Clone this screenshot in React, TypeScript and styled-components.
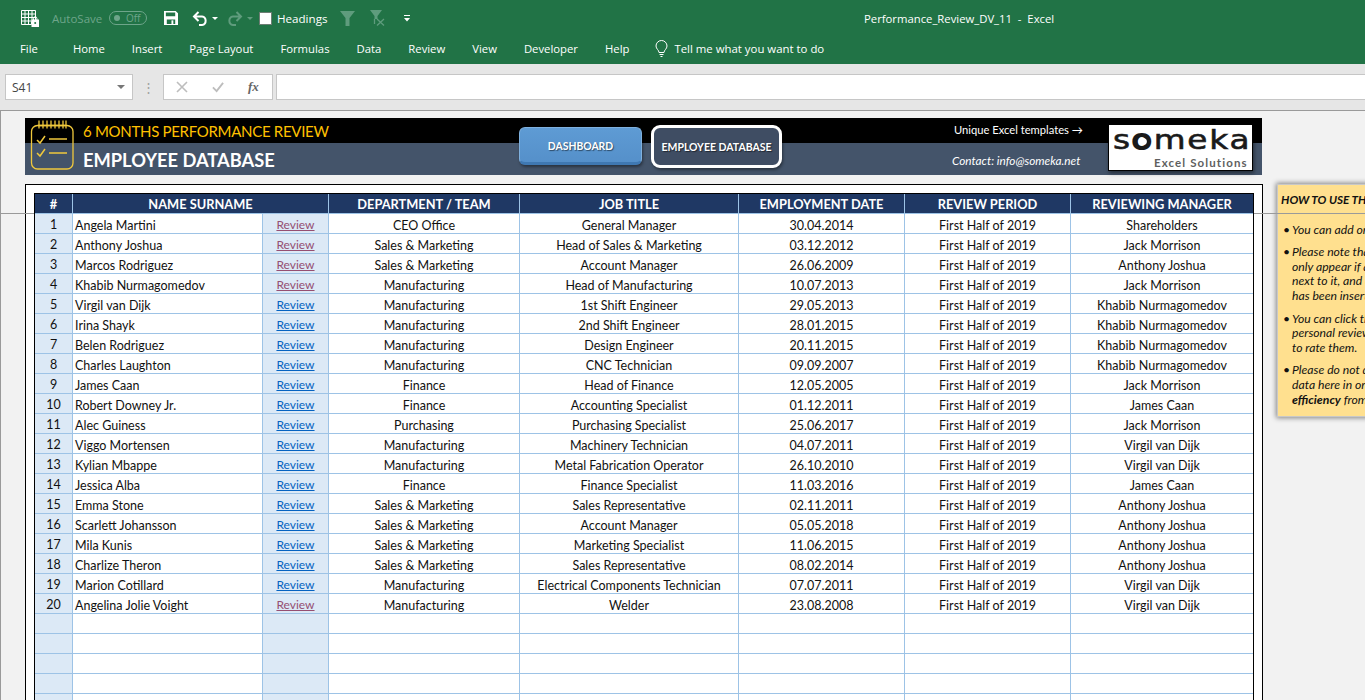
import React from 'react';
import styled, { createGlobalStyle } from 'styled-components';

const employees = [
  ['Angela Martini', 'CEO Office', 'General Manager', '30.04.2014', 'Shareholders', true],
  ['Anthony Joshua', 'Sales & Marketing', 'Head of Sales & Marketing', '03.12.2012', 'Jack Morrison', true],
  ['Marcos Rodriguez', 'Sales & Marketing', 'Account Manager', '26.06.2009', 'Anthony Joshua', true],
  ['Khabib Nurmagomedov', 'Manufacturing', 'Head of Manufacturing', '10.07.2013', 'Jack Morrison', true],
  ['Virgil van Dijk', 'Manufacturing', '1st Shift Engineer', '29.05.2013', 'Khabib Nurmagomedov', false],
  ['Irina Shayk', 'Manufacturing', '2nd Shift Engineer', '28.01.2015', 'Khabib Nurmagomedov', false],
  ['Belen Rodriguez', 'Manufacturing', 'Design Engineer', '20.11.2015', 'Khabib Nurmagomedov', false],
  ['Charles Laughton', 'Manufacturing', 'CNC Technician', '09.09.2007', 'Khabib Nurmagomedov', false],
  ['James Caan', 'Finance', 'Head of Finance', '12.05.2005', 'Jack Morrison', false],
  ['Robert Downey Jr.', 'Finance', 'Accounting Specialist', '01.12.2011', 'James Caan', false],
  ['Alec Guiness', 'Purchasing', 'Purchasing Specialist', '25.06.2017', 'Jack Morrison', false],
  ['Viggo Mortensen', 'Manufacturing', 'Machinery Technician', '04.07.2011', 'Virgil van Dijk', false],
  ['Kylian Mbappe', 'Manufacturing', 'Metal Fabrication Operator', '26.10.2010', 'Virgil van Dijk', false],
  ['Jessica Alba', 'Finance', 'Finance Specialist', '11.03.2016', 'James Caan', false],
  ['Emma Stone', 'Sales & Marketing', 'Sales Representative', '02.11.2011', 'Anthony Joshua', false],
  ['Scarlett Johansson', 'Sales & Marketing', 'Account Manager', '05.05.2018', 'Anthony Joshua', false],
  ['Mila Kunis', 'Sales & Marketing', 'Marketing Specialist', '11.06.2015', 'Anthony Joshua', false],
  ['Charlize Theron', 'Sales & Marketing', 'Sales Representative', '08.02.2014', 'Anthony Joshua', false],
  ['Marion Cotillard', 'Manufacturing', 'Electrical Components Technician', '07.07.2011', 'Virgil van Dijk', false],
  ['Angelina Jolie Voight', 'Manufacturing', 'Welder', '23.08.2008', 'Virgil van Dijk', true],
] as const;

const menuItems = ['Home', 'Insert', 'Page Layout', 'Formulas', 'Data', 'Review', 'View', 'Developer', 'Help'];
const emptyRows = [1, 2, 3, 4, 5];

function App() {
  return (
    <>
      <GlobalStyle />
      <Window>
        <FreezeLine />
        <TitleBar>
          <SheetIcon viewBox="0 0 18 17" fill="none" stroke="#fff" strokeWidth="1">
            <path d="M.5.5h14v11h-4v3h-10zM.5 4h14M.5 7.5h14M.5 11h10M4 .5v14M7.5.5v14M11 .5v11" />
            <rect x="11" y="10" width="6.5" height="6.5" fill="#fff" />
            <path d="M12.500 10V8.500a1.700 1.700 0 0 1 3.400 0V10" />
            <circle cx="14.200" cy="13" r="1" fill="#217346" stroke="none" />
          </SheetIcon>
          <AutoSave>AutoSave</AutoSave>
          <Toggle>
            <ToggleDot />
            <ToggleLabel>Off</ToggleLabel>
          </Toggle>
          <SaveIcon viewBox="0 0 15 15">
            <path fill="#fff" fillRule="evenodd" d="M0 0h12.500L15 2.500V15H0zM2 1.500v4h10v-4zM3 9v5h9V9z" />
            <rect x="8" y="10" width="2" height="4" fill="#fff" />
          </SaveIcon>
          <UndoIcon viewBox="0 0 16 15" fill="none" stroke="#fff" strokeWidth="2">
            <path d="M6.500 1 2 5.500 6.500 10M2 5.500h8a4.300 4.300 0 0 1 0 8.500H7" />
          </UndoIcon>
          <Caret $color="#fff" />
          <RedoIcon viewBox="0 0 16 15" fill="none" stroke="#5f9c7d" strokeWidth="2">
            <path d="M9.500 1 14 5.500 9.500 10M14 5.500H6a4.300 4.300 0 0 0 0 8.500h3" />
          </RedoIcon>
          <Caret $color="#5f9c7d" />
          <CheckBox />
          <Headings>Headings</Headings>
          <FilterIcon viewBox="0 0 15 15" fill="#5f9c7d">
            <path d="M0 0h15L9.500 7v8h-4V7z" />
          </FilterIcon>
          <ClearFilterIcon viewBox="0 0 16 16" fill="#5f9c7d">
            <path d="M0 0h12L7.500 6v3H4.500V6z" />
            <path d="m7 9 7 6.500M14 9l-7 6.500M4.500 9v5" stroke="#5f9c7d" strokeWidth="1.300" fill="none" />
          </ClearFilterIcon>
          <CustomizeIcon viewBox="0 0 6 7" fill="#fff">
            <path d="M0 0h6v1H0zM0 3h6L3 6.500z" />
          </CustomizeIcon>
          <WindowTitle>Performance_Review_DV_11  -  Excel</WindowTitle>
        </TitleBar>

        <MenuBar>
          <FileItem>File</FileItem>
          {menuItems.map((item) => (
            <MenuItem key={item}>{item}</MenuItem>
          ))}
          <TellMe>
            <BulbIcon viewBox="0 0 13 17" fill="none" stroke="#fff" strokeWidth="1">
              <path d="M4 12.500C4 10 1 9 1 6a5.500 5.500 0 0 1 11 0c0 3-3 4-3 6.500zM4.500 14.500h4M5.500 16.500h2" />
            </BulbIcon>
            Tell me what you want to do
          </TellMe>
        </MenuBar>

        <FormulaBar>
          <NameBox>
            S41
            <NameCaret />
          </NameBox>
          <Dots>⋮</Dots>
          <FormulaButtons>
            <MutedIcon viewBox="0 0 12 12" stroke="#bdbdbd" strokeWidth="1.600" fill="none">
              <path d="m1 1 10 10M11 1 1 11" />
            </MutedIcon>
            <MutedIcon viewBox="0 0 13 12" stroke="#bdbdbd" strokeWidth="2" fill="none">
              <path d="m1 6.500 4 4 7-9" />
            </MutedIcon>
            <FxLabel>fx</FxLabel>
          </FormulaButtons>
          <FormulaInput />
        </FormulaBar>

        <Sheet>
          <Banner>
            <ClipboardIcon viewBox="0 0 44 52" fill="none" stroke="#f0c83c" strokeWidth="1.300">
              <rect x="1.500" y="7.500" width="41.500" height="43.500" rx="6" />
              <path d="M8 7.500h28M9 2.500v8M13 2.500v8M17 2.500v8M21 2.500v8M25 2.500v8M29 2.500v8M33 2.500v8M36 2.500v8" />
              <path d="m7 22 3 3 5-7M19 21h18M7 35l3 3 5-7M19 35h18" strokeWidth="1.500" />
            </ClipboardIcon>
            <Titles>
              <Subtitle>6 MONTHS PERFORMANCE REVIEW</Subtitle>
              <PageTitle>EMPLOYEE DATABASE</PageTitle>
            </Titles>
            <DashboardButton>DASHBOARD</DashboardButton>
            <DatabaseButton>EMPLOYEE DATABASE</DatabaseButton>
            <Promo>
              <PromoLine>Unique Excel templates →</PromoLine>
              <ContactLine>Contact: info@someka.net</ContactLine>
            </Promo>
            <Logo>
              <LogoName>
                s<LogoO>o</LogoO>meka
              </LogoName>
              <LogoTag>Excel Solutions</LogoTag>
            </Logo>
          </Banner>

          <Workspace>
            <TableBox>
              <Table>
                <HeaderRow>
                  <HeaderCell>#</HeaderCell>
                  <HeaderCell>NAME SURNAME</HeaderCell>
                  <HeaderCell>DEPARTMENT / TEAM</HeaderCell>
                  <HeaderCell>JOB TITLE</HeaderCell>
                  <HeaderCell>EMPLOYMENT DATE</HeaderCell>
                  <HeaderCell>REVIEW PERIOD</HeaderCell>
                  <HeaderCell>REVIEWING MANAGER</HeaderCell>
                </HeaderRow>
                {employees.map((row, i) => (
                  <Row key={row[0]}>
                    <IndexCell>{i + 1}</IndexCell>
                    <NameCell>{row[0]}</NameCell>
                    <ReviewCell>
                      <ReviewLink $visited={row[5]}>Review</ReviewLink>
                    </ReviewCell>
                    <Cell>{row[1]}</Cell>
                    <Cell>{row[2]}</Cell>
                    <Cell>{row[3]}</Cell>
                    <Cell>First Half of 2019</Cell>
                    <Cell>{row[4]}</Cell>
                  </Row>
                ))}
                {emptyRows.map((n) => (
                  <Row key={n}>
                    <IndexCell />
                    <NameCell />
                    <ReviewCell />
                    <Cell />
                    <Cell />
                    <Cell />
                    <Cell />
                    <Cell />
                  </Row>
                ))}
              </Table>
            </TableBox>

            <Note>
              <NoteTitle>HOW TO USE THIS SHEET</NoteTitle>
              <NoteItem>You can add or edit employees here.</NoteItem>
              <NoteItem>
                Please note that the review link will
                <br />
                only appear if an employee name is
                <br />
                next to it, and after the manager
                <br />
                has been inserted.
              </NoteItem>
              <NoteItem>
                You can click the link to go to the
                <br />
                personal review sheet of employees
                <br />
                to rate them.
              </NoteItem>
              <NoteItem>
                Please do not delete or overwrite
                <br />
                data here in order to get the
                <br />
                <strong>efficiency</strong> from reports.
              </NoteItem>
            </Note>
          </Workspace>
        </Sheet>
      </Window>
    </>
  );
}

const GlobalStyle = createGlobalStyle`
  html, body {
    margin: 0;
    padding: 0;
    overflow: hidden;
    background: #f2f2f2;
  }
`;

const Window = styled.div`
  position: relative;
  width: 1365px;
  height: 700px;
  overflow: hidden;
  display: flex;
  flex-direction: column;
  font-family: 'Lato', 'Liberation Sans', sans-serif;
`;

const FreezeLine = styled.div`
  position: absolute;
  left: 0;
  right: 0;
  top: 213px;
  height: 1px;
  background: #9a9a9a;
  z-index: 3;
`;

const TitleBar = styled.div`
  height: 36px;
  flex: none;
  display: flex;
  align-items: center;
  background: #217346;
  color: #fff;
  font-family: 'Open Sans', 'Liberation Sans', sans-serif;
  font-size: 12px;
`;

const SheetIcon = styled.svg`
  width: 18px;
  height: 17px;
  margin: 0 13px 0 21px;
`;

const AutoSave = styled.span`
  color: #6ea58a;
  width: 50px;
  font-size: 11.500px;
  white-space: nowrap;
`;

const Toggle = styled.div`
  width: 38px;
  height: 14px;
  margin-left: 7px;
  border: 1px solid #6ea58a;
  border-radius: 8px;
  box-sizing: border-box;
  display: flex;
  align-items: center;
  gap: 6px;
  padding-left: 4px;
  color: #6ea58a;
`;

const ToggleDot = styled.span`
  width: 6px;
  height: 6px;
  border-radius: 50%;
  background: #6ea58a;
`;

const ToggleLabel = styled.span`
  font-size: 10px;
`;

const SaveIcon = styled.svg`
  width: 14px;
  height: 14px;
  margin-left: 17px;
`;

const UndoIcon = styled.svg`
  width: 16px;
  height: 15px;
  margin-left: 14px;
`;

const RedoIcon = styled.svg`
  width: 16px;
  height: 15px;
  margin-left: 9px;
`;

const Caret = styled.span<{ $color: string }>`
  width: 0;
  height: 0;
  margin-left: 4px;
  border-left: 3px solid transparent;
  border-right: 3px solid transparent;
  border-top: 3px solid ${(props) => props.$color};
`;

const CheckBox = styled.span`
  width: 11px;
  height: 11px;
  margin-left: 6px;
  background: #fff;
  border: 1px solid #6d7d74;
`;

const Headings = styled.span`
  margin-left: 5px;
  width: 49px;
  font-size: 11.600px;
  white-space: nowrap;
`;

const FilterIcon = styled.svg`
  width: 15px;
  height: 15px;
  margin-left: 14px;
`;

const ClearFilterIcon = styled.svg`
  width: 16px;
  height: 16px;
  margin-left: 15px;
`;

const CustomizeIcon = styled.svg`
  width: 6px;
  height: 7px;
  margin-left: 18px;
`;

const WindowTitle = styled.span`
  margin-left: 454px;
  font-size: 11.300px;
  white-space: pre;
`;

const MenuBar = styled.div`
  height: 28px;
  flex: none;
  display: flex;
  align-items: flex-start;
  gap: 27px;
  padding-left: 20px;
  background: #217346;
  color: #fff;
  font-family: 'Open Sans', 'Liberation Sans', sans-serif;
  font-size: 11.300px;
  line-height: 25px;
`;

const MenuItem = styled.span`
  white-space: nowrap;
`;

const FileItem = styled(MenuItem)`
  margin-right: 8px;
`;

const TellMe = styled.span`
  display: flex;
  align-items: center;
  gap: 6px;
  margin-left: -1px;
  font-size: 11.400px;
  white-space: nowrap;
`;

const BulbIcon = styled.svg`
  width: 13px;
  height: 17px;
`;

const FormulaBar = styled.div`
  height: 47px;
  flex: none;
  box-sizing: border-box;
  display: flex;
  align-items: flex-start;
  padding: 10px 0 0 5px;
  background: #e6e6e6;
  border-bottom: 1px solid #9a9a9a;
`;

const NameBox = styled.div`
  width: 128px;
  height: 26px;
  box-sizing: border-box;
  display: flex;
  align-items: center;
  justify-content: space-between;
  padding: 0 7px 0 6px;
  background: #fff;
  border: 1px solid #c6c6c6;
  color: #444;
  font-family: 'Open Sans', 'Liberation Sans', sans-serif;
  font-size: 12px;
`;

const NameCaret = styled.span`
  width: 0;
  height: 0;
  border-left: 4px solid transparent;
  border-right: 4px solid transparent;
  border-top: 4px solid #777;
`;

const Dots = styled.span`
  width: 30px;
  text-align: center;
  line-height: 26px;
  color: #a0a0a0;
  font-size: 13px;
`;

const FormulaButtons = styled.div`
  width: 110px;
  height: 26px;
  box-sizing: border-box;
  display: flex;
  align-items: center;
  padding-left: 12px;
  gap: 24px;
  background: #fff;
  border: 1px solid #c6c6c6;
`;

const MutedIcon = styled.svg`
  width: 12px;
  height: 12px;
`;

const FxLabel = styled.span`
  font-family: 'Liberation Serif', serif;
  font-style: italic;
  font-weight: 700;
  font-size: 13px;
  color: #666;
`;

const FormulaInput = styled.div`
  flex: 1;
  height: 26px;
  margin-left: 3px;
  box-sizing: border-box;
  background: #fff;
  border: 1px solid #c6c6c6;
  border-right: 0;
`;

const Sheet = styled.div`
  flex: 1;
  min-height: 0;
  padding: 7px 0 0 24px;
  border-left: 1px solid #9a9a9a;
  background: #f2f2f2;
`;

const Banner = styled.div`
  width: 1237px;
  height: 57px;
  box-sizing: border-box;
  display: flex;
  align-items: stretch;
  background: linear-gradient(#000 25px, #44546a 25px);
`;

const ClipboardIcon = styled.svg`
  width: 44px;
  height: 52px;
  margin: 0 9px 0 5px;
  flex: none;
`;

const Titles = styled.div`
  width: 436px;
  flex: none;
  display: flex;
  flex-direction: column;
`;

const Subtitle = styled.div`
  height: 25px;
  line-height: 26px;
  color: #ffc000;
  font-size: 15px;
  letter-spacing: -0.3px;
  white-space: nowrap;
`;

const PageTitle = styled.div`
  height: 32px;
  line-height: 35px;
  color: #fff;
  font-size: 18.300px;
  font-weight: 700;
  white-space: nowrap;
`;

const DashboardButton = styled.div`
  width: 123px;
  height: 38px;
  flex: none;
  margin-top: 9px;
  box-sizing: border-box;
  display: flex;
  align-items: center;
  justify-content: center;
  padding-top: 2px;
  border-radius: 6px;
  border: 1px solid #7fb0de;
  border-bottom: 3px solid #3f78b2;
  background: linear-gradient(#5e9bd4, #5590ca);
  box-shadow: 1px 2px 3px rgba(0, 0, 0, 0.4);
  color: #fff;
  font-size: 10.400px;
  font-weight: 700;
  text-shadow: 1px 1px 1px rgba(0, 0, 0, 0.5);
`;

const DatabaseButton = styled(DashboardButton)`
  width: 131px;
  height: 43px;
  margin: 7px 0 0 9px;
  padding-top: 0;
  border: 3px solid #fff;
  border-radius: 9px;
  background: #3f4d63;
  font-size: 10.500px;
`;

const Promo = styled.div`
  width: 128px;
  flex: none;
  margin-left: 172px;
  display: flex;
  flex-direction: column;
  color: #fff;
  font-size: 11.200px;
  white-space: nowrap;
`;

const PromoLine = styled.div`
  height: 25px;
  line-height: 24px;
`;

const ContactLine = styled.div`
  height: 32px;
  margin-left: -2px;
  line-height: 35px;
  font-size: 11.800px;
  font-style: italic;
`;

const Logo = styled.div`
  width: 145px;
  height: 47px;
  flex: none;
  margin: 6px 0 0 26px;
  box-sizing: border-box;
  display: flex;
  flex-direction: column;
  padding: 0 0 0 4px;
  background: #fff;
  border: 1px solid #000;
  box-shadow: 1px 2px 4px rgba(0, 0, 0, 0.5);
  overflow: hidden;
`;

const LogoName = styled.div`
  height: 30px;
  font-family: 'DejaVu Sans', sans-serif;
  font-size: 27px;
  line-height: 29px;
  letter-spacing: 1.500px;
  color: #1a1a1a;
  -webkit-text-stroke: 0.6px #1a1a1a;
  transform: scaleX(1.21);
  transform-origin: left center;
  white-space: nowrap;
`;

const LogoO = styled.span`
  position: relative;
  -webkit-text-stroke: 2px #1a1a1a;

  &::after {
    content: '';
    position: absolute;
    left: 5px;
    top: 14px;
    width: 7px;
    height: 7px;
    background: #fff;
    border-radius: 50%;
  }
`;

const LogoTag = styled.div`
  margin: 1px 0 0 41px;
  color: #5f5f5f;
  font-size: 11.500px;
  line-height: 13px;
  font-weight: 700;
  letter-spacing: 1.100px;
  white-space: nowrap;
`;

const Workspace = styled.div`
  display: flex;
  align-items: flex-start;
  margin-top: 9px;
`;

const TableBox = styled.div`
  width: 1238px;
  height: 600px;
  flex: none;
  box-sizing: border-box;
  padding: 8px 0 0 8px;
  background: #fff;
  border: 1px solid #000;
  border-bottom: 0;
`;

const Table = styled.div`
  position: relative;
  z-index: 4;
  width: 1220px;
  box-sizing: border-box;
  border: solid #000;
  border-width: 1px 1px 0 1px;
  background: #fff;
  color: #111;
  font-size: 12.500px;
`;

const HeaderRow = styled.div`
  display: grid;
  grid-template-columns: 38px 256px 191px 219px 166px 166px 182px;
  height: 19px;
  background: #1f3864;
  color: #fff;
  font-size: 12.800px;
  font-weight: 700;
`;

const HeaderCell = styled.div`
  display: flex;
  align-items: center;
  justify-content: center;
  padding-top: 1px;
  border-right: 1px solid #9dc3e6;
  white-space: nowrap;

  &:last-child {
    border-right: 0;
  }
`;

const Row = styled.div`
  display: grid;
  grid-template-columns: 38px 190px 66px 191px 219px 166px 166px 182px;
  height: 20px;
  box-sizing: border-box;
  border-top: 1px solid #9dc3e6;
`;

const Cell = styled.div`
  display: flex;
  align-items: center;
  justify-content: center;
  padding-top: 3px;
  border-right: 1px solid #9dc3e6;
  white-space: nowrap;

  &:last-child {
    border-right: 0;
  }
`;

const IndexCell = styled(Cell)`
  background: #dce9f6;
  padding-top: 1px;
`;

const NameCell = styled(Cell)`
  justify-content: flex-start;
  padding-left: 2px;
`;

const ReviewCell = styled(Cell)`
  background: #dce9f6;
  padding-top: 1px;
`;

const ReviewLink = styled.span<{ $visited: boolean }>`
  color: ${(props) => (props.$visited ? '#954f72' : '#0563c1')};
  text-decoration: underline;
  font-size: 12px;
`;

const Note = styled.div`
  width: 240px;
  height: 233px;
  flex: none;
  margin-left: 14px;
  box-sizing: border-box;
  padding: 7px 0 0 3px;
  background: #ffe08f;
  border: 1px solid #c8c8c8;
  box-shadow: 0 0 5px 1px rgba(0, 0, 0, 0.45);
  color: #111;
  font-size: 12.200px;
  font-style: italic;
  line-height: 14.600px;
  white-space: nowrap;
`;

const NoteTitle = styled.div`
  font-size: 11.700px;
  font-weight: 700;
  margin-bottom: 16px;
`;

const NoteItem = styled.div`
  position: relative;
  margin-bottom: 8px;
  padding-left: 11px;

  &::before {
    content: '•';
    position: absolute;
    left: 2px;
    font-style: normal;
  }
`;

export default App;
